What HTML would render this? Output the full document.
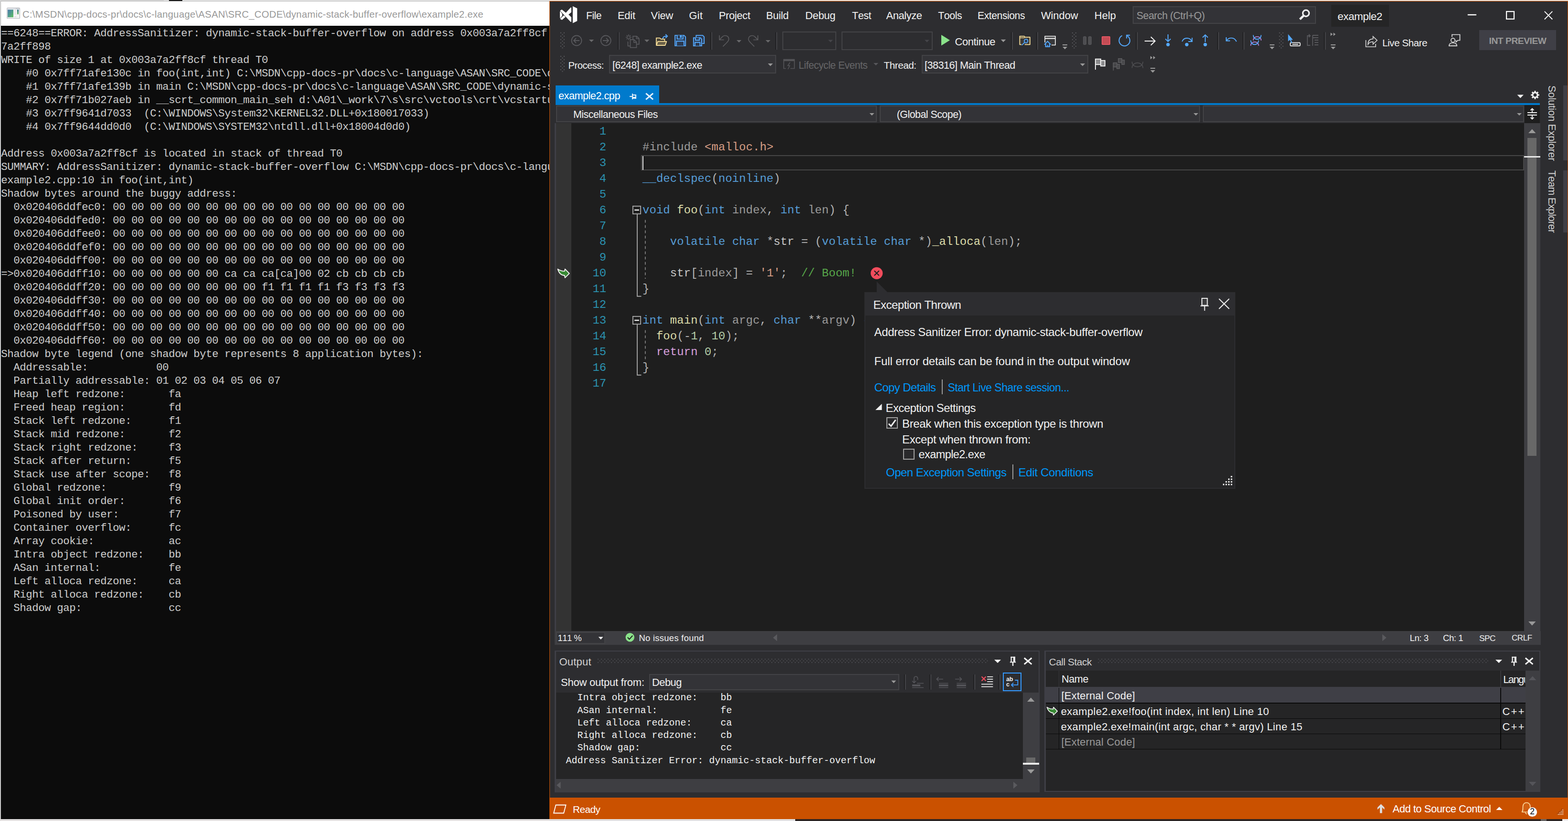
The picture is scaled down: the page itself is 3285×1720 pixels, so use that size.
<!DOCTYPE html>
<html lang="en"><head><meta charset="utf-8"><title>example2 - Address Sanitizer</title><style>
html,body{margin:0;padding:0;background:#0c0c0c}
#pg{position:relative;width:3285px;height:1720px;overflow:hidden;background:#e9e9e9;font-family:"Liberation Sans",sans-serif;font-kerning:none}
.r{position:absolute;display:block}
.t{position:absolute;white-space:pre;font-family:"Liberation Sans",sans-serif}
.b{font-weight:bold}
.m{font-family:"Liberation Mono",monospace}
pre{margin:0;position:absolute;font-family:"Liberation Mono",monospace;white-space:pre}
.con{left:2.3px;top:56.25px;font-size:22.5px;line-height:28px;letter-spacing:-0.502px;color:#cccccc}
.code{font-size:24px;line-height:33px;letter-spacing:0.048px}
.out{font-size:20px;line-height:26.25px;letter-spacing:0;color:#f1f1f1}
svg.ov{position:absolute;left:0;top:0}
</style></head><body><div id="pg">
<div class="r" style="left:0px;top:0px;width:3285px;height:3px;background:#e6e6e6;"></div><div class="r" style="left:354px;top:0px;width:28px;height:3px;background:#111;"></div><div class="r" style="left:0px;top:1716px;width:1666px;height:4px;background:#e2dfdf;"></div><div class="r" style="left:1px;top:3px;width:1px;height:1713px;background:#a8a8a8;"></div><div class="r" style="left:1px;top:2px;width:1150px;height:1px;background:#b4b4b4;"></div><div class="r" style="left:0px;top:0px;width:343px;height:2px;background:#d6d6d6;"></div><div class="r" style="left:1666px;top:1716px;width:1619px;height:4px;background:#2e2422;"></div><div class="r" style="left:3228px;top:1716px;width:12px;height:4px;background:#6a6462;"></div><div class="r" style="left:3273px;top:1716px;width:12px;height:4px;background:#f0ecec;"></div>
<div class="r" style="left:0;top:0;width:1151px;height:1720px;overflow:hidden">
<div class="r" style="left:2px;top:3px;width:1149px;height:51px;background:#ffffff;"></div>
<svg class="r" style="left:14px;top:16px;" width="28" height="23" viewBox="0 0 28 23"><defs><linearGradient id="cg" x1="0" y1="0" x2="1" y2="1"><stop offset="0" stop-color="#4c79ad"/><stop offset="0.5" stop-color="#4f9a8c"/><stop offset="1" stop-color="#62c25c"/></linearGradient><linearGradient id="cg2" x1="0" y1="0" x2="0" y2="1"><stop offset="0" stop-color="#2f6c8c"/><stop offset="1" stop-color="#6fbf6a"/></linearGradient></defs><rect x="0.8" y="0.6" width="26.6" height="22" rx="1.2" fill="#f3f3f4" stroke="#b3b6bb" stroke-width="1.2"/><rect x="1.4" y="1.2" width="25.4" height="2.3" fill="#dde1e8"/><rect x="19" y="1.2" width="7.5" height="1.5" fill="#c3c6cc"/><rect x="2.1" y="4.2" width="11.9" height="16" fill="url(#cg)"/><g fill="#dedede"><rect x="16.1" y="4.5" width="4.2" height="1.8"/><rect x="16.1" y="8.3" width="4.2" height="2"/><rect x="16.1" y="12.2" width="4.2" height="1.8"/><rect x="16.1" y="18.2" width="4.2" height="2"/></g><rect x="22" y="4.2" width="3.1" height="9.8" fill="url(#cg2)"/></svg>
<span class="t" style="left:47px;top:16.8px;font-size:20.3px;line-height:26px;letter-spacing:0.28px;color:#999999;">C:\MSDN\cpp-docs-pr\docs\c-language\ASAN\SRC_CODE\dynamic-stack-buffer-overflow\example2.exe</span>
<div class="r" style="left:2px;top:54px;width:1149px;height:1662px;background:#0c0c0c;"></div>
<pre class="con">==6248==ERROR: AddressSanitizer: dynamic-stack-buffer-overflow on address 0x003a7a2ff8cf at pc 0x7ff71afe130d
7a2ff898
WRITE of size 1 at 0x003a7a2ff8cf thread T0
    #0 0x7ff71afe130c in foo(int,int) C:\MSDN\cpp-docs-pr\docs\c-language\ASAN\SRC_CODE\dynamic-stack
    #1 0x7ff71afe139b in main C:\MSDN\cpp-docs-pr\docs\c-language\ASAN\SRC_CODE\dynamic-stack-buffer
    #2 0x7ff71b027aeb in __scrt_common_main_seh d:\A01\_work\7\s\src\vctools\crt\vcstartup\src\startup
    #3 0x7ff9641d7033  (C:\WINDOWS\System32\KERNEL32.DLL+0x180017033)
    #4 0x7ff9644dd0d0  (C:\WINDOWS\SYSTEM32\ntdll.dll+0x18004d0d0)

Address 0x003a7a2ff8cf is located in stack of thread T0
SUMMARY: AddressSanitizer: dynamic-stack-buffer-overflow C:\MSDN\cpp-docs-pr\docs\c-language\ASAN\SRC
example2.cpp:10 in foo(int,int)
Shadow bytes around the buggy address:
  0x020406ddfec0: 00 00 00 00 00 00 00 00 00 00 00 00 00 00 00 00
  0x020406ddfed0: 00 00 00 00 00 00 00 00 00 00 00 00 00 00 00 00
  0x020406ddfee0: 00 00 00 00 00 00 00 00 00 00 00 00 00 00 00 00
  0x020406ddfef0: 00 00 00 00 00 00 00 00 00 00 00 00 00 00 00 00
  0x020406ddff00: 00 00 00 00 00 00 00 00 00 00 00 00 00 00 00 00
=&gt;0x020406ddff10: 00 00 00 00 00 00 ca ca ca[ca]00 02 cb cb cb cb
  0x020406ddff20: 00 00 00 00 00 00 00 00 f1 f1 f1 f1 f3 f3 f3 f3
  0x020406ddff30: 00 00 00 00 00 00 00 00 00 00 00 00 00 00 00 00
  0x020406ddff40: 00 00 00 00 00 00 00 00 00 00 00 00 00 00 00 00
  0x020406ddff50: 00 00 00 00 00 00 00 00 00 00 00 00 00 00 00 00
  0x020406ddff60: 00 00 00 00 00 00 00 00 00 00 00 00 00 00 00 00
Shadow byte legend (one shadow byte represents 8 application bytes):
  Addressable:           00
  Partially addressable: 01 02 03 04 05 06 07
  Heap left redzone:       fa
  Freed heap region:       fd
  Stack left redzone:      f1
  Stack mid redzone:       f2
  Stack right redzone:     f3
  Stack after return:      f5
  Stack use after scope:   f8
  Global redzone:          f9
  Global init order:       f6
  Poisoned by user:        f7
  Container overflow:      fc
  Array cookie:            ac
  Intra object redzone:    bb
  ASan internal:           fe
  Left alloca redzone:     ca
  Right alloca redzone:    cb
  Shadow gap:              cc</pre>
</div>
<div class="r" style="left:1151px;top:2px;width:2134px;height:1714px;background:#ca5100;"></div>
<div class="r" style="left:1152px;top:3px;width:2132px;height:1668px;background:#2d2d30;"></div>
<span class="t" style="left:1228px;top:18.6px;font-size:21.25px;line-height:28px;letter-spacing:-0.58px;color:#f1f1f1;">File</span>
<span class="t" style="left:1294px;top:17.9px;font-size:22px;line-height:29px;letter-spacing:-0.3px;color:#f1f1f1;">Edit</span>
<span class="t" style="left:1363.5px;top:17.9px;font-size:22px;line-height:29px;letter-spacing:-0.26px;color:#f1f1f1;">View</span>
<span class="t" style="left:1443.5px;top:17.9px;font-size:22px;line-height:29px;letter-spacing:0.19px;color:#f1f1f1;">Git</span>
<span class="t" style="left:1506px;top:17.9px;font-size:22px;line-height:29px;letter-spacing:-0.41px;color:#f1f1f1;">Project</span>
<span class="t" style="left:1605px;top:17.9px;font-size:22px;line-height:29px;letter-spacing:-0.36px;color:#f1f1f1;">Build</span>
<span class="t" style="left:1687px;top:17.9px;font-size:22px;line-height:29px;letter-spacing:-0.33px;color:#f1f1f1;">Debug</span>
<span class="t" style="left:1785px;top:18.6px;font-size:21.5px;line-height:28px;letter-spacing:-0.48px;color:#f1f1f1;">Test</span>
<span class="t" style="left:1856.5px;top:17.9px;font-size:22px;line-height:29px;letter-spacing:-0.46px;color:#f1f1f1;">Analyze</span>
<span class="t" style="left:1965.2px;top:18.6px;font-size:21.5px;line-height:28px;letter-spacing:-0.5px;color:#f1f1f1;">Tools</span>
<span class="t" style="left:2048px;top:18.6px;font-size:21.25px;line-height:28px;letter-spacing:-0.49px;color:#f1f1f1;">Extensions</span>
<span class="t" style="left:2180.9px;top:17.9px;font-size:22px;line-height:29px;letter-spacing:-0.09px;color:#f1f1f1;">Window</span>
<span class="t" style="left:2292.8px;top:17.9px;font-size:22px;line-height:29px;letter-spacing:-0.02px;color:#f1f1f1;">Help</span>
<div class="r" style="left:2373px;top:12.5px;width:384px;height:37px;background:#333337;box-sizing:border-box;border:2px solid #434346"></div>
<span class="t" style="left:2381px;top:18.6px;font-size:21.5px;line-height:28px;letter-spacing:-0.55px;color:#999999;">Search (Ctrl+Q)</span>
<div class="r" style="left:2789px;top:10px;width:121px;height:45.5px;background:#252526;"></div>
<span class="t" style="left:2802.3px;top:19.7px;font-size:22.5px;line-height:29px;letter-spacing:-0.51px;color:#f1f1f1;">example2</span>
<span class="t" style="left:1190.5px;top:124.1px;font-size:20.25px;line-height:26px;letter-spacing:-0.54px;color:#f1f1f1;">Process:</span>
<div class="r" style="left:1276px;top:114.5px;width:350px;height:39.5px;background:#333337;box-sizing:border-box;border:2px solid #434346"></div>
<span class="t" style="left:1283px;top:122.7px;font-size:21.25px;line-height:28px;letter-spacing:-0.49px;color:#f1f1f1;">[6248] example2.exe</span>
<span class="t" style="left:1673px;top:122.7px;font-size:21.25px;line-height:28px;letter-spacing:-0.57px;color:#656567;">Lifecycle Events</span>
<span class="t" style="left:1851.5px;top:123.4px;font-size:20.75px;line-height:27px;letter-spacing:-0.5px;color:#f1f1f1;">Thread:</span>
<div class="r" style="left:1930.5px;top:114.5px;width:349px;height:39.5px;background:#333337;box-sizing:border-box;border:2px solid #434346"></div>
<span class="t" style="left:1937px;top:122.6px;font-size:21.75px;line-height:28px;letter-spacing:-0.57px;color:#f1f1f1;">[38316] Main Thread</span>
<div class="r" style="left:1638.5px;top:65.5px;width:113.5px;height:39.5px;background:#2d2d30;box-sizing:border-box;border:2px solid #434346"></div>
<div class="r" style="left:1762.5px;top:65.5px;width:191.5px;height:39.5px;background:#2d2d30;box-sizing:border-box;border:2px solid #434346"></div>
<span class="t" style="left:2000.5px;top:72.9px;font-size:22px;line-height:29px;letter-spacing:-0.44px;color:#f1f1f1;">Continue</span>
<span class="t" style="left:2896px;top:75.5px;font-size:20.75px;line-height:27px;letter-spacing:-0.52px;color:#f1f1f1;">Live Share</span>
<div class="r" style="left:3099px;top:63px;width:161px;height:42px;background:#3f3f46;"></div>
<span class="t b" style="left:3119.5px;top:73px;font-size:19.25px;line-height:25px;letter-spacing:-0.46px;color:#999999;">INT PREVIEW</span>
<div class="r" style="left:1164px;top:179px;width:217px;height:37px;background:#007acc;"></div>
<div class="r" style="left:1164px;top:215.5px;width:2062px;height:4.5px;background:#007acc;"></div>
<span class="t" style="left:1170px;top:187.1px;font-size:21.75px;line-height:28px;letter-spacing:-0.54px;color:#ffffff;">example2.cpp</span>
<div class="r" style="left:1164px;top:220px;width:2062px;height:38px;background:#2d2d30;"></div>
<div class="r" style="left:1165px;top:221px;width:671.5px;height:35px;background:#333337;box-sizing:border-box;border:2px solid #434346"></div>
<div class="r" style="left:1842.5px;top:221px;width:671.5px;height:35px;background:#333337;box-sizing:border-box;border:2px solid #434346"></div>
<div class="r" style="left:2520px;top:221px;width:672.5px;height:35px;background:#333337;box-sizing:border-box;border:2px solid #434346"></div>
<div class="r" style="left:3194px;top:220px;width:32px;height:37.5px;background:#1e1e1e;"></div>
<span class="t" style="left:1201px;top:226.4px;font-size:21.5px;line-height:28px;letter-spacing:-0.56px;color:#f1f1f1;">Miscellaneous Files</span>
<span class="t" style="left:1878.7px;top:226.4px;font-size:21.5px;line-height:28px;letter-spacing:-0.57px;color:#f1f1f1;">(Global Scope)</span>
<div class="r" style="left:3274.5px;top:179px;width:9.5px;height:156.5px;background:#3f3f46;"></div>
<div class="r" style="left:3274.5px;top:357px;width:9.5px;height:129.5px;background:#3f3f46;"></div>
<span class="t" style="left:3262px;top:179px;font-size:21.5px;line-height:22px;color:#d0d0d0;transform-origin:0 0;transform:rotate(90deg);letter-spacing:-0.33px">Solution Explorer</span>
<span class="t" style="left:3262px;top:357px;font-size:21.5px;line-height:22px;color:#d0d0d0;transform-origin:0 0;transform:rotate(90deg);letter-spacing:-0.85px">Team Explorer</span>
<div class="r" style="left:1162px;top:258px;width:2.5px;height:1064px;background:#3f3f46;"></div>
<div class="r" style="left:1164.5px;top:258px;width:32.5px;height:1064px;background:#333333;"></div>
<div class="r" style="left:1197px;top:258px;width:1996px;height:1064px;background:#1e1e1e;"></div>
<div class="r" style="left:3193px;top:258px;width:33.5px;height:1064px;background:#3e3e42;"></div>
<div class="r" style="left:3199.7px;top:289px;width:19.5px;height:665.5px;background:#686868;"></div>
<div class="r" style="left:3193px;top:326.5px;width:33.5px;height:3.5px;background:#e8e8e8;"></div>
<div class="r" style="left:1343px;top:324.5px;width:1849.5px;height:32.5px;background:transparent;box-sizing:border-box;border:2.5px solid #464646"></div>
<div class="r" style="left:1346px;top:327px;width:2px;height:28.5px;background:#e0e0e0;"></div>
<pre class="code" style="left:1197px;top:259.1px;width:73.3px;text-align:right;color:#2b91af">1
2
3
4
5
6
7
8
9
10
11
12
13
14
15
16
17</pre>
<pre class="code" style="left:1346px;top:259.1px;color:#b4b4b4">

<span style="color:#9b9b9b">#include</span> <span style="color:#d69d85">&lt;malloc.h&gt;</span>

<span style="color:#569cd6">__declspec</span>(<span style="color:#569cd6">noinline</span>)

<span style="color:#569cd6">void</span> <span style="color:#dcdcaa">foo</span>(<span style="color:#569cd6">int</span> <span style="color:#9a9a9a">index</span>, <span style="color:#569cd6">int</span> <span style="color:#9a9a9a">len</span>) {

    <span style="color:#569cd6">volatile</span> <span style="color:#569cd6">char</span> *<span style="color:#c8c8c8">str</span> = (<span style="color:#569cd6">volatile</span> <span style="color:#569cd6">char</span> *)<span style="color:#dcdcaa">_alloca</span>(<span style="color:#9a9a9a">len</span>);

    <span style="color:#c8c8c8">str</span>[<span style="color:#9a9a9a">index</span>] = <span style="color:#d69d85">'1'</span>;  <span style="color:#57a64a">// Boom!</span>
}

<span style="color:#569cd6">int</span> <span style="color:#dcdcaa">main</span>(<span style="color:#569cd6">int</span> <span style="color:#9a9a9a">argc</span>, <span style="color:#569cd6">char</span> **<span style="color:#9a9a9a">argv</span>) {
  <span style="color:#dcdcaa">foo</span>(-<span style="color:#b5cea8">1</span>, <span style="color:#b5cea8">10</span>);
  <span style="color:#d8a0df">return</span> <span style="color:#b5cea8">0</span>;
}
</pre>
<div class="r" style="left:1162px;top:1322px;width:2065.5px;height:29px;background:#3e3e42;"></div>
<div class="r" style="left:1165px;top:1323.5px;width:102.5px;height:25.5px;background:#333337;box-sizing:border-box;border:2px solid #434346"></div>
<span class="t" style="left:1168.5px;top:1324.6px;font-size:18.5px;line-height:24px;letter-spacing:-0.55px;color:#f1f1f1;">111 %</span>
<span class="t" style="left:1338.5px;top:1324.6px;font-size:18.5px;line-height:24px;letter-spacing:0.24px;color:#f1f1f1;">No issues found</span>
<span class="t" style="left:2953.5px;top:1324.6px;font-size:18.5px;line-height:24px;letter-spacing:-0.41px;color:#f1f1f1;">Ln: 3</span>
<span class="t" style="left:3023px;top:1324.6px;font-size:18.5px;line-height:24px;letter-spacing:-0.43px;color:#f1f1f1;">Ch: 1</span>
<span class="t" style="left:3099px;top:1326px;font-size:17.25px;line-height:22px;letter-spacing:-0.48px;color:#f1f1f1;">SPC</span>
<span class="t" style="left:3167px;top:1326.1px;font-size:17px;line-height:22px;letter-spacing:-0.46px;color:#f1f1f1;">CRLF</span>
<div class="r" style="left:1162px;top:1362.5px;width:1016px;height:297.5px;background:#3f3f46;"></div>
<div class="r" style="left:1164.5px;top:1365px;width:1011px;height:293px;background:#2d2d30;"></div>
<span class="t" style="left:1171.5px;top:1371.9px;font-size:22px;line-height:29px;letter-spacing:0.19px;color:#d0d0d0;">Output</span>
<span class="t" style="left:1175px;top:1414.9px;font-size:22px;line-height:29px;letter-spacing:-0.22px;color:#f1f1f1;">Show output from:</span>
<div class="r" style="left:1359.5px;top:1411.5px;width:524.5px;height:34px;background:#333337;box-sizing:border-box;border:2px solid #434346"></div>
<span class="t" style="left:1366px;top:1414.9px;font-size:22px;line-height:29px;letter-spacing:-0.58px;color:#f1f1f1;">Debug</span>
<div class="r" style="left:1164.5px;top:1451px;width:978.5px;height:180.5px;background:#252526;"></div>
<div class="r" style="left:2143px;top:1451px;width:33.5px;height:180.5px;background:#3e3e42;"></div>
<div class="r" style="left:1164.5px;top:1631.5px;width:1012px;height:27px;background:#3e3e42;"></div>
<div class="r" style="left:2150px;top:1586.5px;width:19px;height:11.5px;background:#686868;"></div>
<div class="r" style="left:2143px;top:1598px;width:33.5px;height:4px;background:#e8e8e8;"></div>
<pre class="out" style="left:1185.5px;top:1449.45px">  Intra object redzone:    bb
  ASan internal:           fe
  Left alloca redzone:     ca
  Right alloca redzone:    cb
  Shadow gap:              cc
Address Sanitizer Error: dynamic-stack-buffer-overflow</pre>
<div class="r" style="left:2101px;top:1409px;width:39.2px;height:39.2px;background:#2d2d30;box-sizing:border-box;border:2.2px solid #3399ff"></div>
<div class="r" style="left:2188px;top:1362.5px;width:1039px;height:296.5px;background:#3f3f46;"></div>
<div class="r" style="left:2190.5px;top:1365px;width:1034px;height:291.5px;background:#2d2d30;"></div>
<span class="t" style="left:2197.5px;top:1373.2px;font-size:21px;line-height:27px;letter-spacing:-0.5px;color:#d0d0d0;">Call Stack</span>
<div class="r" style="left:2190.5px;top:1404.5px;width:1005px;height:252px;background:#252526;"></div>
<div class="r" style="left:3195.5px;top:1404.5px;width:31px;height:252px;background:#3e3e42;"></div>
<div class="r" style="left:2190.5px;top:1439px;width:1005px;height:2px;background:#3f3f46;"></div>
<div class="r" style="left:2190.5px;top:1441px;width:1005px;height:31px;background:#3f3f46;"></div>
<div class="r" style="left:2190.5px;top:1472px;width:1005px;height:1.7px;background:#0a0a0a;"></div>
<div class="r" style="left:2190.5px;top:1504.5px;width:1005px;height:1.7px;background:#0a0a0a;"></div>
<div class="r" style="left:2190.5px;top:1536.5px;width:1005px;height:1.7px;background:#0a0a0a;"></div>
<div class="r" style="left:2190.5px;top:1568.5px;width:1005px;height:1.7px;background:#0a0a0a;"></div>
<div class="r" style="left:2217.5px;top:1441px;width:1.7px;height:129px;background:#0a0a0a;"></div>
<div class="r" style="left:3143px;top:1441px;width:1.7px;height:129px;background:#0a0a0a;"></div>
<div class="r" style="left:2217.5px;top:1404.5px;width:1.7px;height:34.5px;background:#38383b;"></div>
<div class="r" style="left:3143px;top:1404.5px;width:1.7px;height:34.5px;background:#38383b;"></div>
<span class="t" style="left:2224px;top:1409.1px;font-size:21.75px;line-height:28px;letter-spacing:-0.51px;color:#f1f1f1;">Name</span>
<div class="r" style="left:3144.7px;top:1404.5px;width:50.8px;height:35px;overflow:hidden"><span class="t" style="left:4.5px;top:4px;font-size:22px;line-height:29px;color:#f1f1f1;letter-spacing:-1.6px;">Language</span></div>
<span class="t" style="left:2223.5px;top:1443.3px;font-size:22px;line-height:29px;letter-spacing:0.2px;color:#f1f1f1;">[External Code]</span>
<span class="t" style="left:2222.7px;top:1475.7px;font-size:22px;line-height:29px;letter-spacing:0.38px;color:#f1f1f1;">example2.exe!foo(int index, int len) Line 10</span>
<span class="t" style="left:2222.7px;top:1507.6px;font-size:22px;line-height:29px;letter-spacing:0.34px;color:#f1f1f1;">example2.exe!main(int argc, char * * argv) Line 15</span>
<span class="t" style="left:2223.5px;top:1539.6px;font-size:22px;line-height:29px;letter-spacing:0.2px;color:#999999;">[External Code]</span>
<span class="t" style="left:3147.5px;top:1475.7px;font-size:22px;line-height:29px;letter-spacing:2.21px;color:#f1f1f1;">C++</span>
<span class="t" style="left:3147.5px;top:1507.6px;font-size:22px;line-height:29px;letter-spacing:2.21px;color:#f1f1f1;">C++</span>
<div class="r" style="left:1152px;top:1670.5px;width:2132px;height:45.5px;background:#ca5100;"></div>
<span class="t" style="left:1200px;top:1682.1px;font-size:20.75px;line-height:27px;letter-spacing:-0.5px;color:#ffffff;">Ready</span>
<span class="t" style="left:2917.5px;top:1680.4px;font-size:22px;line-height:29px;letter-spacing:-0.5px;color:#ffffff;">Add to Source Control</span>
<svg class="ov" width="3285" height="1720" viewBox="0 0 3285 1720"><g fill="#fff"><path d="M1199.9 12.9L1209.2 17.5V44.1L1199.9 48.6z"/><path d="M1196.9 15.8V25.8L1191.1 30.6L1196.9 36V45.7H1195.3L1173.3 22.3L1177 20L1185.5 26.8L1195.5 15.8z"/><path d="M1173.3 39.5L1181.4 32L1184.7 35.5L1177.4 41.8z"/><path d="M1173 24.3H1174.3L1177.8 28.9V33L1174.3 37.6H1173z"/></g>
<g stroke="#f1f1f1" fill="none" stroke-width="3.2"><circle cx="2736" cy="27.7" r="6.6"/><path d="M2731.3 32.7L2723.3 40.3" stroke-width="4.6"/></g>
<g stroke="#fff" fill="none"><path d="M3074.8 31H3093" stroke-width="2.4"/><rect x="3156.1" y="24.1" width="15.9" height="15.7" stroke-width="2.2"/><path d="M3235.8 23.8L3252.3 40.5M3252.3 23.8L3235.8 40.5" stroke-width="1.8"/></g>
<g fill="#59595d"><rect x="1173.9" y="67.8" width="2" height="2"/><rect x="1180.9" y="67.8" width="2" height="2"/><rect x="1177.4" y="71.3" width="2" height="2"/><rect x="1173.9" y="74.8" width="2" height="2"/><rect x="1180.9" y="74.8" width="2" height="2"/><rect x="1177.4" y="78.3" width="2" height="2"/><rect x="1173.9" y="81.8" width="2" height="2"/><rect x="1180.9" y="81.8" width="2" height="2"/><rect x="1177.4" y="85.3" width="2" height="2"/><rect x="1173.9" y="88.8" width="2" height="2"/><rect x="1180.9" y="88.8" width="2" height="2"/><rect x="1177.4" y="92.3" width="2" height="2"/><rect x="1173.9" y="95.8" width="2" height="2"/><rect x="1180.9" y="95.8" width="2" height="2"/><rect x="1177.4" y="99.3" width="2" height="2"/></g>
<g fill="#59595d"><rect x="1173.9" y="117" width="2" height="2"/><rect x="1180.9" y="117" width="2" height="2"/><rect x="1177.4" y="120.5" width="2" height="2"/><rect x="1173.9" y="124" width="2" height="2"/><rect x="1180.9" y="124" width="2" height="2"/><rect x="1177.4" y="127.5" width="2" height="2"/><rect x="1173.9" y="131" width="2" height="2"/><rect x="1180.9" y="131" width="2" height="2"/><rect x="1177.4" y="134.5" width="2" height="2"/><rect x="1173.9" y="138" width="2" height="2"/><rect x="1180.9" y="138" width="2" height="2"/><rect x="1177.4" y="141.5" width="2" height="2"/><rect x="1173.9" y="145" width="2" height="2"/><rect x="1180.9" y="145" width="2" height="2"/><rect x="1177.4" y="148.5" width="2" height="2"/></g>
<g stroke="#58585c" fill="none" stroke-width="1.8"><circle cx="1208" cy="85" r="10.5"/><path d="M1214 85H1202M1207 80L1202 85L1207 90"/><circle cx="1269.3" cy="85" r="10.5"/><path d="M1263 85H1275M1270 80L1275 85L1270 90"/></g>
<path d="M1234 83h10.2l-5.1 5z" fill="#6a6a6c"/>
<path d="M1295 67.5V104" stroke="#1f1f21" stroke-width="1.6"/><path d="M1297.2 67.5V104" stroke="#46464a" stroke-width="1.8"/>
<g stroke="#58585c" fill="#2d2d30" stroke-width="1.7"><path d="M1315.5 87v9.3h6"/><path d="M1326 75.8h8l4.8 4.8v12h-12.8z"/><path d="M1333.5 76v5h5" fill="none"/><path d="M1320.5 83.2h8l5 5v11.4h-13z"/><path d="M1328 83.5v5.3h5.3" fill="none"/></g><g stroke="#58585c" stroke-width="1.6"><path d="M1317 72v4M1317 80v4M1311 78h4M1319 78h4M1312.8 73.8l2.8 2.8M1318.4 79.4l2.8 2.8M1321.2 73.8l-2.8 2.8M1315.6 79.4l-2.8 2.8"/></g>
<path d="M1350 83h10.4l-5.2 5.2z" fill="#6a6a6c"/>
<path d="M1375 94.5V79.6h7l3 2.3h7.4v4" fill="#4a4436" stroke="#f6dd98" stroke-width="1.8"/><path d="M1378.1 86.9h18.3l-2.9 8.1h-18.4z" fill="#6a6048" stroke="#f6dd98" stroke-width="1.8" stroke-linejoin="round"/><path d="M1388.5 81c0.3-3.5 2.5-5 7.5-5.2M1394.3 71.9l3.9 3.9l-3.9 3.9" fill="none" stroke="#55aaff" stroke-width="2"/>
<g stroke="#55aaff" fill="#2c3a50" stroke-width="1.9"><path d="M1414.2 74.1h19l3 3.2v18.5h-22z"/><path d="M1418.7 74.1v7.5h12.2v-7.5" /><path d="M1417.2 95.8v-9.5h15.8v9.5"/></g><rect x="1424.5" y="74" width="3.8" height="5.2" fill="#55aaff"/>
<g stroke="#55aaff" fill="#2c3a50" stroke-width="1.9"><path d="M1458.4 78v-3.9h13.8l3 3v14h-4"/><path d="M1452.9 79.3h14.3l2.8 2.8v14h-17.1z"/><path d="M1457 79.3v5h8.2v-5M1456 96v-7.3h10.5v7.3"/></g>
<path d="M1489 67.5V104" stroke="#1f1f21" stroke-width="1.6"/><path d="M1491.2 67.5V104" stroke="#46464a" stroke-width="1.8"/>
<g stroke="#5a5a5d" fill="none" stroke-width="1.7"><path d="M1507.2 74V83.5H1516.7M1507.5 83.2L1513.5 76.8C1518 72.5 1526.8 74.5 1526.8 82.1C1526.8 85.5 1525 87 1522.5 89.5L1514.6 97.3"/><path d="M1587.7 74V83.5H1578.2M1587.4 83.2L1581.4 76.8C1576.9 72.5 1568.1 74.5 1568.1 82.1C1568.1 85.5 1569.9 87 1572.4 89.5L1580.3 97.3"/></g>
<path d="M1543.1000000000001 84h10.2l-5.1 5z" fill="#6a6a6c"/>
<path d="M1603.9 84h10.2l-5.1 5z" fill="#6a6a6c"/>
<path d="M1625.1 67.5V104" stroke="#1f1f21" stroke-width="1.6"/><path d="M1627.3 67.5V104" stroke="#46464a" stroke-width="1.8"/>
<path d="M1735 83.5h10l-5 5z" fill="#46464a"/>
<path d="M1937 83.5h10l-5 5z" fill="#46464a"/>
<path d="M1972 73L1990 84.3L1972 95.5z" fill="#8ae28a"/>
<path d="M2096.75 82.75h10.5l-5.25 5.5z" fill="#999"/>
<path d="M2118.8 67.5V104" stroke="#1f1f21" stroke-width="1.6"/><path d="M2121 67.5V104" stroke="#46464a" stroke-width="1.8"/>
<path d="M2140 93.3h-3.6v-17.4h9.3l1.8 1.9h10.3v15.5h-11" fill="#3d3a37" stroke="#f6dd98" stroke-width="1.8" stroke-linejoin="round"/><path d="M2136.4 79.3h9l1.8-1.5" fill="none" stroke="#f6dd98" stroke-width="1.6"/><g stroke="#55aaff" fill="#2c3a50" stroke-width="1.9"><circle cx="2149.6" cy="85.9" r="3.8"/><path d="M2146.8 88.7L2140.8 94.7"/></g>
<path d="M2171.7 67.5V104" stroke="#1f1f21" stroke-width="1.6"/><path d="M2173.8999999999996 67.5V104" stroke="#46464a" stroke-width="1.8"/>
<path d="M2203 94.3h8v-18.4h-21.9v13" fill="#38383a" stroke="#e4e4e4" stroke-width="1.8" stroke-linejoin="round"/><path d="M2189.1 80.5h21.9" stroke="#e4e4e4" stroke-width="2.4"/><path d="M2188 93.3l6.7-6.7l6.7 6.7M2190.6 91.5v6.3h8.4v-6.3" fill="#2c3a50" stroke="#55aaff" stroke-width="1.9"/><path d="M2194.8 98v-4" stroke="#55aaff" stroke-width="1.6"/>
<rect x="2226" y="93" width="10" height="2" fill="#999"/><path d="M2226 98.1h10l-5 5.1z" fill="#999"/>
<g fill="#59595d"><rect x="2245.9" y="68" width="2" height="2"/><rect x="2252.9" y="68" width="2" height="2"/><rect x="2249.4" y="71.5" width="2" height="2"/><rect x="2245.9" y="75" width="2" height="2"/><rect x="2252.9" y="75" width="2" height="2"/><rect x="2249.4" y="78.5" width="2" height="2"/><rect x="2245.9" y="82" width="2" height="2"/><rect x="2252.9" y="82" width="2" height="2"/><rect x="2249.4" y="85.5" width="2" height="2"/><rect x="2245.9" y="89" width="2" height="2"/><rect x="2252.9" y="89" width="2" height="2"/><rect x="2249.4" y="92.5" width="2" height="2"/><rect x="2245.9" y="96" width="2" height="2"/><rect x="2252.9" y="96" width="2" height="2"/><rect x="2249.4" y="99.5" width="2" height="2"/></g>
<g fill="#4d4d50" stroke="#5c5c5f" stroke-width="1"><rect x="2269.7" y="76.7" width="5.7" height="16.6" rx="1"/><rect x="2280.4" y="76.7" width="5.9" height="16.6" rx="1"/></g>
<rect x="2308.8" y="76.7" width="16.5" height="16.5" rx="1" fill="#c44c55" stroke="#f25a68" stroke-width="1.5"/>
<g stroke="#55aaff" fill="none" stroke-width="2"><path d="M2350.9 74.7A11.3 11.3 0 1 0 2361.5 75.1"/><path d="M2360.3 80.6V73.7H2367.3"/></g>
<path d="M2380.5 67.5V104" stroke="#1f1f21" stroke-width="1.6"/><path d="M2382.7 67.5V104" stroke="#46464a" stroke-width="1.8"/>
<g stroke="#f1f1f1" fill="none" stroke-width="1.9"><path d="M2398 86h21.5M2411 77.2l9 8.8l-9 8.8"/></g>
<g stroke="#55aaff" fill="none" stroke-width="1.9"><path d="M2447 72v15M2441.5 81.5l5.5 5.5l5.5-5.5"/></g><circle cx="2447" cy="93.3" r="3.6" fill="#55aaff"/>
<g stroke="#55aaff" fill="none" stroke-width="1.9"><path d="M2476.5 87a11 11 0 0 1 20-1M2497.5 79v8h-8"/></g><circle cx="2486.3" cy="93.3" r="3.6" fill="#55aaff"/>
<g stroke="#55aaff" fill="none" stroke-width="1.9"><path d="M2525 88v-15.5M2519.5 78.5l5.5-5.5l5.5 5.5"/></g><circle cx="2525" cy="93.3" r="3.6" fill="#55aaff"/>
<path d="M2550.8 67.5V104" stroke="#1f1f21" stroke-width="1.6"/><path d="M2553 67.5V104" stroke="#46464a" stroke-width="1.8"/>
<g stroke="#55aaff" fill="none" stroke-width="1.9"><path d="M2569 78v7.5h8M2569.5 85c5-7 16-8 21 2"/></g>
<path d="M2604 67.5V104" stroke="#1f1f21" stroke-width="1.6"/><path d="M2606.2 67.5V104" stroke="#46464a" stroke-width="1.8"/>
<g fill="none" stroke-width="1.9" stroke-linecap="round"><path d="M2625.7 84C2626 74.5 2641.5 74.5 2642 84M2620.4 95C2620.7 85.5 2636.4 85.5 2636.7 95" stroke="#b180d7"/><path d="M2625.7 74.2C2626 85 2641.5 85 2642 74.2M2620.4 85.2C2620.7 96 2636.4 96 2636.7 85.2" stroke="#55aaff"/></g>
<rect x="2660" y="93" width="10" height="2" fill="#999"/><path d="M2660 98.1h10l-5 5.1z" fill="#999"/>
<g fill="#59595d"><rect x="2679.7" y="67.9" width="2" height="2"/><rect x="2686.7" y="67.9" width="2" height="2"/><rect x="2683.2" y="71.4" width="2" height="2"/><rect x="2679.7" y="74.9" width="2" height="2"/><rect x="2686.7" y="74.9" width="2" height="2"/><rect x="2683.2" y="78.4" width="2" height="2"/><rect x="2679.7" y="81.9" width="2" height="2"/><rect x="2686.7" y="81.9" width="2" height="2"/><rect x="2683.2" y="85.4" width="2" height="2"/><rect x="2679.7" y="88.9" width="2" height="2"/><rect x="2686.7" y="88.9" width="2" height="2"/><rect x="2683.2" y="92.4" width="2" height="2"/><rect x="2679.7" y="95.9" width="2" height="2"/><rect x="2686.7" y="95.9" width="2" height="2"/><rect x="2683.2" y="99.4" width="2" height="2"/></g>
<rect x="2703.2" y="89.4" width="20.6" height="6.8" rx="1.5" fill="#2d2d30" stroke="#f1f1f1" stroke-width="1.8"/><path d="M2707.5 92.8h12.3" stroke="#f1f1f1" stroke-width="1.8"/><path d="M2698.6 71.4V86.5L2702.5 83.5L2705.3 90.3L2707.4 89.4L2704.6 83.6H2708.8Z" fill="#55aaff"/>
<g stroke="#58585c" fill="none" stroke-width="1.8"><path d="M2745 75h-6v20h6M2742 72l3 3l-3 3" /><path d="M2750 74h12M2750 79h12M2754 84h8M2754 89h8M2754 94h8M2750 74v22"/></g>
<path d="M2774.5 67.5V104" stroke="#1f1f21" stroke-width="1.6"/><path d="M2776.7 67.5V104" stroke="#46464a" stroke-width="1.8"/>
<path d="M2787.5 68.3l4.5 3.5l-4.5 3.5zM2793.5 68.3l4.5 3.5l-4.5 3.5z" fill="#999"/>
<rect x="2788" y="93" width="10" height="2" fill="#999"/><path d="M2788 98.1h10l-5 5.1z" fill="#999"/>
<g stroke="#d4d4d4" fill="none" stroke-width="1.7"><path d="M2861.5 84v14h20.5v-6"/><path d="M2866 93c0-8 4-11.5 10.5-11.5v-5l8.5 8l-8.5 8v-5c-5 0-8 1-10.5 5.5z"/></g>
<g stroke="#e0e0e0" fill="none" stroke-width="1.7"><path d="M3042 77.5v-5h16.5v12h-4.3l-3.7 3.3v-3.3"/><circle cx="3044" cy="84.3" r="4.2"/><path d="M3035.8 96.2c0-4.2 3.4-6.7 8.2-6.7s8.2 2.5 8.2 6.7z" fill="#3c3c3e"/></g>
<path d="M1608.75 133.05h10.5l-5.25 5.5z" fill="#999"/>
<g stroke="#545457" fill="none" stroke-width="1.7"><path d="M1646.5 143.5h-4.6v-18.8h22.4v18.8h-8.3"/><path d="M1641.9 126h22.4" stroke-width="4.2"/><path d="M1655.2 130.5l-4.7 7h4l-3.7 7.5" stroke-width="1.6"/></g>
<path d="M1830 132h10l-5 5z" fill="#58585c"/>
<path d="M2262.75 133.05h10.5l-5.25 5.5z" fill="#999"/>
<g stroke="#f0f0f0" fill="#8a8a8c" stroke-width="1.9"><path d="M2295 146v-22.3" fill="none"/><rect x="2295" y="123.7" width="11.1" height="11.5"/><rect x="2306.1" y="126.8" width="8.8" height="11.5"/></g>
<g stroke="#5c5c5f" fill="#454548" stroke-width="1.6"><path d="M2332.5 147.7v-16" fill="none"/><rect x="2332.5" y="131.6" width="7.3" height="8.7"/><rect x="2339.8" y="134.7" width="5.4" height="9"/><rect x="2343" y="122.8" width="7.3" height="8.2"/><rect x="2350.3" y="125.9" width="5.2" height="9.1"/></g>
<g stroke="#4d4d50" fill="none" stroke-width="1.7"><path d="M2371.6 129.3C2372 143.5 2394 143.5 2394.5 129.3M2371.6 142.6C2372 128 2394 128 2394.5 142.6"/></g>
<path d="M2410 117.2l4.5 3.5l-4.5 3.5zM2416 117.2l4.5 3.5l-4.5 3.5z" fill="#999"/>
<rect x="2410.1" y="142" width="10" height="2" fill="#999"/><path d="M2410.1 147.1h10l-5 5.1z" fill="#999"/>
<g fill="#e4f1fb"><rect x="1319" y="201.1" width="5.5" height="2"/><rect x="1324" y="196.1" width="2" height="12"/><rect x="1326" y="198" width="7" height="2"/><rect x="1331" y="198" width="2" height="8.8"/><rect x="1326" y="202.9" width="7" height="3.9"/></g><path d="M1353.2 195.6l15 12.7M1368.2 195.6l-15 12.7" stroke="#e4f1fb" stroke-width="3" fill="none"/>
<path d="M3178.5 198.5h13.5l-6.75 7z" fill="#f1f1f1"/>
<g transform="translate(3216 199)"><circle r="5" fill="none" stroke="#f1f1f1" stroke-width="3"/><g stroke="#f1f1f1" stroke-width="3.2"><path d="M0 -8.8V-5.5M0 8.8V5.5M-8.8 0H-5.5M8.8 0H5.5M-6.2 -6.2L-3.9 -3.9M6.2 6.2L3.9 3.9M-6.2 6.2L-3.9 3.9M6.2 -6.2L3.9 -3.9"/></g></g>
<path d="M1821.6 237h10l-5 5z" fill="#999"/>
<path d="M2500.4 237h10l-5 5z" fill="#999"/>
<path d="M3178 237h10l-5 5z" fill="#999"/>
<g stroke="#f1f1f1" fill="none" stroke-width="1.8"><path d="M3200 236h20M3200 241h20M3210 227.5v8M3210 241.5v8M3206.5 231l3.5-3.5l3.5 3.5M3206.5 246l3.5 3.5l3.5-3.5"/></g><path d="M1335 448.5V620.7H1343.5" fill="none" stroke="#a5a5a5" stroke-width="1.9"/>
<rect x="1325.9" y="431.9" width="16.2" height="16.2" fill="#1e1e1e" stroke="#a5a5a5" stroke-width="1.9"/>
<path d="M1329.2 440h9.7" stroke="#f4f4f4" stroke-width="2.4"/>
<path d="M1335 679.5V785.7H1343.5" fill="none" stroke="#a5a5a5" stroke-width="1.9"/>
<rect x="1325.9" y="662.9" width="16.2" height="16.2" fill="#1e1e1e" stroke="#a5a5a5" stroke-width="1.9"/>
<path d="M1329.2 671h9.7" stroke="#f4f4f4" stroke-width="2.4"/>
<path d="M1351.9 460.8V584" stroke="#808080" stroke-width="1.8" stroke-dasharray="5.8 5.2"/>
<path d="M1351.9 691.8V756" stroke="#808080" stroke-width="1.8" stroke-dasharray="5.8 5.2"/>
<path d="M1168.5 563.7C1173 567 1178 568 1182.8 568.1L1183.7 563.7L1192.7 572.8L1183.7 581.9L1182.8 577C1176 577 1171 572 1168.5 563.7Z" fill="#388a34" stroke="#f0f0f0" stroke-width="1.9" stroke-linejoin="round"/>
<circle cx="1836.7" cy="572.3" r="12.6" fill="#f14c5c"/><path d="M1831.7 567.3l10 10M1841.7 567.3l-10 10" stroke="#1e1e1e" stroke-width="2"/>
<path d="M3202 279h15.5l-7.75-8.5z" fill="#999"/>
<path d="M3202 1302h15.5l-7.75 8.5z" fill="#999"/><defs><pattern id="dp" width="7" height="7" patternUnits="userSpaceOnUse" x="1252" y="1379.9"><rect x="0" y="0" width="2" height="2" fill="#4b4b50"/><rect x="3.5" y="3.5" width="2" height="2" fill="#4b4b50"/></pattern><pattern id="dp2" width="7" height="7" patternUnits="userSpaceOnUse" x="2300.3" y="1379.9"><rect x="0" y="0" width="2" height="2" fill="#4b4b50"/><rect x="3.5" y="3.5" width="2" height="2" fill="#4b4b50"/></pattern></defs>
<path d="M1253.7 1334.35h10l-5 5.3z" fill="#f1f1f1"/>
<circle cx="1319.8" cy="1335.3" r="9.2" fill="#8ae28a"/><path d="M1314.8 1335.3l3.7 3.9l6.8-7.5" fill="none" stroke="#1e1e1e" stroke-width="2"/>
<path d="M1628 1328.7v14.5l-8.5-7.25z" fill="#5a5a5e"/>
<path d="M2896 1328.7v14.5l8.5-7.25z" fill="#5a5a5e"/>
<rect x="1252" y="1379.9" width="818" height="9.1" fill="url(#dp)"/>
<g transform="translate(0 0)" fill="#f4f4f4"><path d="M2083 1381.9h14.1l-7.05 7.1z"/><rect x="2117.5" y="1375.8" width="2.2" height="10.4"/><rect x="2117.5" y="1375.8" width="9.4" height="2"/><rect x="2122.8" y="1375.8" width="4.1" height="10.4"/><rect x="2115.9" y="1386.2" width="12.2" height="2"/><rect x="2120.8" y="1388" width="2.4" height="7"/><path d="M2145.8 1378.5l15.6 13.2M2161.4 1378.5l-15.6 13.2" stroke="#f4f4f4" stroke-width="3" fill="none"/></g>
<path d="M1867.3 1425.85h10l-5 5.3z" fill="#999"/>
<path d="M1894.7 1413V1444.8" stroke="#1f1f21" stroke-width="1.6"/><path d="M1897 1413V1444.8" stroke="#46464a" stroke-width="1.8"/>
<path d="M1948 1413V1444.8" stroke="#1f1f21" stroke-width="1.6"/><path d="M1950.3 1413V1444.8" stroke="#46464a" stroke-width="1.8"/>
<path d="M2040 1413V1444.8" stroke="#1f1f21" stroke-width="1.6"/><path d="M2042.3 1413V1444.8" stroke="#46464a" stroke-width="1.8"/>
<path d="M2092.7 1413V1444.8" stroke="#1f1f21" stroke-width="1.6"/><path d="M2095 1413V1444.8" stroke="#46464a" stroke-width="1.8"/>
<g stroke="#55555a" fill="none" stroke-width="1.4"><path d="M1921 1431.5h14M1911 1440.5h24"/><path d="M1911 1435.9h17" stroke-width="3.8"/><path d="M1922.6 1424.5v-3.5a3.8 3.8 0 0 0 -7.6 0v9.5M1911 1426.5l4 4l4-4" stroke-width="1.6"/></g>
<g stroke="#55555a" fill="none" stroke-width="1.4"><path d="M1967 1431.5h19.6M1967 1440.5h19.6"/><path d="M1967 1435.9h19.6" stroke-width="3.8"/><path d="M1975.8 1422.8h-13.5M1966.5 1418.6l-4.2 4.2l4.2 4.2" stroke-width="1.6"/></g>
<g stroke="#55555a" fill="none" stroke-width="1.4"><path d="M2004.3 1431.5h19.6M2004.3 1440.5h19.6"/><path d="M2004.3 1435.9h19.6" stroke-width="3.8"/><path d="M2001 1422.8h13.5M2010.3 1418.6l4.2 4.2l-4.2 4.2" stroke-width="1.6"/></g>
<g stroke="#ececec" fill="none" stroke-width="1.8"><path d="M2068.1 1417.8h12.2M2068.1 1422.8h12.2M2068.1 1428.1h12.2M2056 1433.3h24.3M2056 1438.6h24.3"/></g><path d="M2056.5 1417.5l9 9M2065.5 1417.5l-9 9" stroke="#f14c5c" stroke-width="2.1"/>
<text x="2108" y="1427.2" font-family="Liberation Sans,sans-serif" font-weight="bold" font-size="12.5" fill="#f1f1f1" letter-spacing="-0.3">ab</text><text x="2108" y="1437.7" font-family="Liberation Sans,sans-serif" font-weight="bold" font-size="12.5" fill="#f1f1f1">c</text>
<g stroke="#3d9bff" fill="none" stroke-width="1.8"><path d="M2126.4 1425h5.9v9.9h-13.3M2123.2 1430.6l-4.3 4.3l4.3 4.3"/></g>
<path d="M2152 1470h15.5l-7.75-8.5z" fill="#999"/><path d="M2152 1612h15.5l-7.75 8.5z" fill="#999"/>
<path d="M1174.5 1637.7v14.5l-8.5-7.25z" fill="#5a5a5e"/><path d="M2123 1637.7v14.5l8.5-7.25z" fill="#5a5a5e"/>
<rect x="2300.3" y="1379.9" width="818" height="9.1" fill="url(#dp2)"/>
<g transform="translate(1050 0)" fill="#f4f4f4"><path d="M2083 1381.9h14.1l-7.05 7.1z"/><rect x="2117.5" y="1375.8" width="2.2" height="10.4"/><rect x="2117.5" y="1375.8" width="9.4" height="2"/><rect x="2122.8" y="1375.8" width="4.1" height="10.4"/><rect x="2115.9" y="1386.2" width="12.2" height="2"/><rect x="2120.8" y="1388" width="2.4" height="7"/><path d="M2145.8 1378.5l15.6 13.2M2161.4 1378.5l-15.6 13.2" stroke="#f4f4f4" stroke-width="3" fill="none"/></g>
<path d="M3203 1425h15.5l-7.75-8.5z" fill="#55555a"/><path d="M3203 1638h15.5l-7.75 8.5z" fill="#55555a"/>
<g transform="translate(2204.3 1489.8) scale(0.9) translate(-1180.6 -572.8)"><path d="M1168.5 563.7C1173 567 1178 568 1182.8 568.1L1183.7 563.7L1192.7 572.8L1183.7 581.9L1182.8 577C1176 577 1171 572 1168.5 563.7Z" fill="#388a34" stroke="#f0f0f0" stroke-width="1.9" stroke-linejoin="round"/></g>
<path d="M1164.5 1686.5h21l-4.5 17h-21z" fill="none" stroke="#fff" stroke-width="1.8"/>
<path d="M2893.2 1684.4L2900.4 1691.8V1696.2L2895.6 1691.6V1703.4H2890.9V1691.6L2885.8 1696.2V1691.8Z" fill="#dedede"/>
<path d="M3134.3 1697h13.4l-6.7-6.7z" fill="#fff"/>
<path d="M3188.3 1701.2c2.5-2.5 2.2-5 2.2-11.5c0-11 15.4-11 15.4 0v3" fill="#d26012" stroke="#ffe2a8" stroke-width="1.6"/><path d="M3188.3 1701.2h11M3195.5 1702.5c0.5 1.8 1.8 2.5 3.5 2.8" fill="none" stroke="#ffe2a8" stroke-width="1.6"/>
<circle cx="3210.2" cy="1701.2" r="9.9" fill="#ffffff"/><text x="3205.2" y="1705.7" font-family="Liberation Sans,sans-serif" font-size="17.5" fill="#0a0a14">2</text>
<rect x="3263.9" y="1705.2" width="1.9" height="1.9" fill="#f4d0b8"/><rect x="3262" y="1703.3" width="1.7" height="1.7" fill="#8e3c08"/><rect x="3267" y="1702.1" width="1.9" height="1.9" fill="#f4d0b8"/><rect x="3265.1" y="1700.2" width="1.7" height="1.7" fill="#8e3c08"/><rect x="3267" y="1705.2" width="1.9" height="1.9" fill="#f4d0b8"/><rect x="3265.1" y="1703.3" width="1.7" height="1.7" fill="#8e3c08"/><rect x="3270.1" y="1699" width="1.9" height="1.9" fill="#f4d0b8"/><rect x="3268.2" y="1697.1" width="1.7" height="1.7" fill="#8e3c08"/><rect x="3270.1" y="1702.1" width="1.9" height="1.9" fill="#f4d0b8"/><rect x="3268.2" y="1700.2" width="1.7" height="1.7" fill="#8e3c08"/><rect x="3270.1" y="1705.2" width="1.9" height="1.9" fill="#f4d0b8"/><rect x="3268.2" y="1703.3" width="1.7" height="1.7" fill="#8e3c08"/><rect x="3273.2" y="1695.9" width="1.9" height="1.9" fill="#f4d0b8"/><rect x="3271.3" y="1694" width="1.7" height="1.7" fill="#8e3c08"/><rect x="3273.2" y="1699" width="1.9" height="1.9" fill="#f4d0b8"/><rect x="3271.3" y="1697.1" width="1.7" height="1.7" fill="#8e3c08"/><rect x="3273.2" y="1702.1" width="1.9" height="1.9" fill="#f4d0b8"/><rect x="3271.3" y="1700.2" width="1.7" height="1.7" fill="#8e3c08"/><rect x="3273.2" y="1705.2" width="1.9" height="1.9" fill="#f4d0b8"/><rect x="3271.3" y="1703.3" width="1.7" height="1.7" fill="#8e3c08"/></svg>
<div class="r" style="left:1811px;top:612px;width:777px;height:411.7px;background:#2d2d30;"></div>
<div class="r" style="left:1813px;top:661px;width:773px;height:360.7px;background:#252526;"></div>
<span class="t" style="left:1829.5px;top:623.2px;font-size:24px;line-height:31px;letter-spacing:-0.51px;color:#f1f1f1;">Exception Thrown</span>
<span class="t" style="left:1831.5px;top:679.5px;font-size:24px;line-height:31px;letter-spacing:-0.36px;color:#f1f1f1;">Address Sanitizer Error: dynamic-stack-buffer-overflow</span>
<span class="t" style="left:1831.5px;top:741.2px;font-size:24px;line-height:31px;letter-spacing:-0.14px;color:#f1f1f1;">Full error details can be found in the output window</span>
<span class="t" style="left:1831.5px;top:796.2px;font-size:24px;line-height:31px;letter-spacing:-0.6px;color:#0097fb;">Copy Details</span>
<div class="r" style="left:1972.7px;top:795px;width:2.3px;height:31px;background:#999999;"></div>
<span class="t" style="left:1985.5px;top:797px;font-size:23px;line-height:30px;letter-spacing:-0.52px;color:#0097fb;">Start Live Share session...</span>
<span class="t" style="left:1855.5px;top:839.2px;font-size:24px;line-height:31px;letter-spacing:-0.58px;color:#f1f1f1;">Exception Settings</span>
<div class="r" style="left:1857px;top:874px;width:24.3px;height:24.3px;background:#29292b;box-sizing:border-box;border:2px solid #a0a0a0"></div>
<span class="t" style="left:1890px;top:871.7px;font-size:24px;line-height:31px;letter-spacing:-0.34px;color:#f1f1f1;">Break when this exception type is thrown</span>
<span class="t" style="left:1890px;top:905.4px;font-size:24px;line-height:31px;letter-spacing:-0.35px;color:#f1f1f1;">Except when thrown from:</span>
<div class="r" style="left:1892px;top:939.8px;width:24.3px;height:23.2px;background:#29292b;box-sizing:border-box;border:2px solid #a0a0a0"></div>
<span class="t" style="left:1924.5px;top:937.3px;font-size:23.5px;line-height:31px;letter-spacing:-0.57px;color:#f1f1f1;">example2.exe</span>
<span class="t" style="left:1856px;top:974.2px;font-size:24px;line-height:31px;letter-spacing:-0.51px;color:#0097fb;">Open Exception Settings</span>
<div class="r" style="left:2121px;top:973px;width:2px;height:30.5px;background:#999999;"></div>
<span class="t" style="left:2133.5px;top:974.2px;font-size:24px;line-height:31px;letter-spacing:-0.32px;color:#0097fb;">Edit Conditions</span>
<svg class="ov" width="3285" height="1720" viewBox="0 0 3285 1720"><path d="M1836.7 589.7V613H1860z" fill="#2d2d30"/>
<g stroke="#ececec" fill="none" stroke-width="2"><rect x="2518" y="625" width="11.4" height="14.8" fill="#3f3f41"/><path d="M2515 640.7h17.3M2523.7 641.5V651"/></g>
<path d="M2553.8 626.1l21.4 21M2575.2 626.1l-21.4 21" stroke="#ececec" stroke-width="2.1"/>
<path d="M1847.5 846V859H1834z" fill="#f1f1f1"/>
<path d="M1861.8 887.7l5 5l9.6-13" fill="none" stroke="#f4f4f4" stroke-width="3"/>
<g fill="#f1f1f1"><rect x="2562" y="1013.5" width="3" height="3"/><rect x="2567.5" y="1008" width="3" height="3"/><rect x="2567.5" y="1013.5" width="3" height="3"/><rect x="2573" y="1002.5" width="3" height="3"/><rect x="2573" y="1008" width="3" height="3"/><rect x="2573" y="1013.5" width="3" height="3"/><rect x="2578.5" y="997" width="3" height="3"/><rect x="2578.5" y="1002.5" width="3" height="3"/><rect x="2578.5" y="1008" width="3" height="3"/><rect x="2578.5" y="1013.5" width="3" height="3"/></g></svg>
</div></body></html>
